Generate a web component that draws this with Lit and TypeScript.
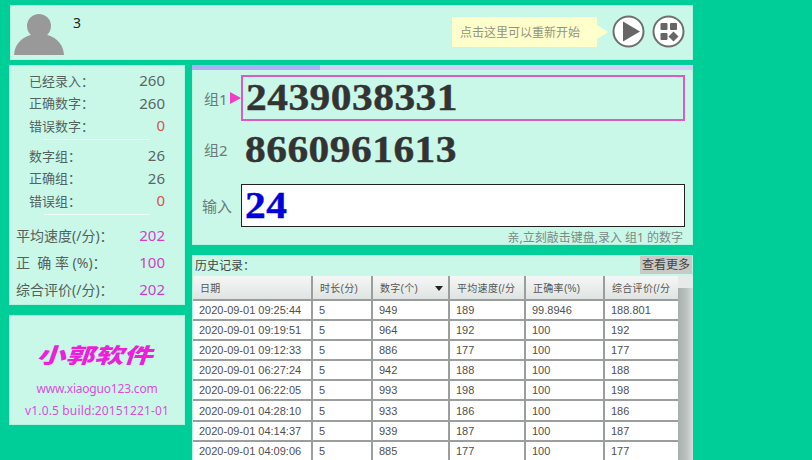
import { LitElement, html, css } from "lit";
import { customElement } from "lit/decorators.js";

const ROWS = [
  ["2020-09-01 09:25:44", "5", "949", "189", "99.8946", "188.801"],
  ["2020-09-01 09:19:51", "5", "964", "192", "100", "192"],
  ["2020-09-01 09:12:33", "5", "886", "177", "100", "177"],
  ["2020-09-01 06:27:24", "5", "942", "188", "100", "188"],
  ["2020-09-01 06:22:05", "5", "993", "198", "100", "198"],
  ["2020-09-01 04:28:10", "5", "933", "186", "100", "186"],
  ["2020-09-01 04:14:37", "5", "939", "187", "100", "187"],
  ["2020-09-01 04:09:06", "5", "885", "177", "100", "177"],
];
const HEAD = ["日期", "时长(分)", "数字(个)", "平均速度(/分", "正确率(%)", "综合评价(/分"];

@customElement("app-root")
export class AppRoot extends LitElement {
  static styles = css`
    :host { display: block; width: 812px; height: 460px; overflow: hidden; background: #00ce98;
      font-family: "Noto Sans", "Noto Sans CJK SC", sans-serif; color: #555; }
    .page { width: 684px; height: 455px; padding: 5px 0 0 9px; display: flex; flex-direction: column; gap: 5px; }
    .panel { background: #c9f8e9; box-shadow: inset 0 0 0 1px #b5f3dc; }
    .body { display: flex; gap: 7px; height: 395px; }
    .col { display: flex; flex-direction: column; gap: 10px; }
    .left { width: 176px; flex: none; }
    .right { width: 501px; flex: none; }

    .top { height: 55px; flex: none; margin-left: 1px; display: flex; align-items: center; padding: 0 4px; box-sizing: border-box; }
    .avatar { width: 50px; height: 41px; align-self: flex-end; margin-bottom: 5px; flex: none; }
    .uid { align-self: flex-start; margin: 6px 0 0 9px; font-size: 14px; line-height: 24px; color: #222; flex: 1; }
    .tip { position: relative; width: 145px; height: 30px; margin: 0 15px 1px 0; background: #ffffcb; display: flex; align-items: center;
      padding-left: 8px; box-sizing: border-box; font-size: 12px; color: #94947f; }
    .tip::after { content: ""; position: absolute; left: 100%; top: 8px; border: 7px solid transparent; border-left: 11px solid #ffffcb; border-right: 0; }
    .ico { width: 33px; height: 33px; flex: none; margin: 0 7px 3px 0; }
    .ico:last-child { margin-right: 4px; }

    .stats { height: 240px; display: flex; flex-direction: column; padding: 4px 20px 0 7px; box-sizing: border-box; }
    .row { display: flex; justify-content: space-between; align-items: center; font-size: 13px; height: 22.5px; padding-left: 13px; color: #55625e; flex: none; }
    .row span:last-child { font-size: 15px; color: #5c6663; }
    .row.err span:last-child { color: #d8534b; }
    .rule { height: 1px; background: #eefff9; margin: 2px 16px 4.5px 28px; flex: none; }
    .rule.second { margin-bottom: 6.5px; }
    .big { display: flex; justify-content: space-between; align-items: center; font-size: 14px; height: 27px; color: #555f5b; flex: none; }
    .big span:last-child { color: #d23fc9; font-size: 15px; }

    .main { height: 180px; box-sizing: border-box; display: flex; flex-direction: column; }
    .bar { height: 5px; background: #d0d0f5; flex: none; }
    .bar i { display: block; height: 100%; width: 128px; background: #aeaef8; }
    .grp { display: flex; align-items: center; position: relative; flex: none; }
    .lbl { width: 49px; padding-left: 12px; box-sizing: border-box; font-size: 15px; color: #6d7b76; flex: none; }
    .num { font-family: "Liberation Serif", serif; font-weight: 700; font-size: 37px; color: #333; padding-left: 4px; }
    .dg { display: inline-block; transform: scaleX(1.12); transform-origin: left center; letter-spacing: .43px; -webkit-text-stroke: .4px currentColor; }
    .g1 { margin-top: 5px; height: 46px; }
    .g1 .num { flex: 1; height: 46px; box-sizing: border-box; border: 2px solid #d85cc4; margin-right: 8px; padding-left: 3px; line-height: 42px; }
    .arrow { position: absolute; left: 38px; top: 17px; width: 0; height: 0; border: 6px solid transparent; border-left: 11px solid #f03cc8; border-right: 0; }
    .g2 { margin-top: 7px; height: 42px; }
    .g3 { margin-top: 14px; height: 43px; }
    .g3 .lbl { padding-left: 10px; }
    .g3 .inp { flex: 1; height: 43px; border: 1px solid #222; background: #fff; margin-right: 8px; padding-left: 3px; box-sizing: border-box;
      font-family: "Liberation Serif", serif; font-weight: 700; font-size: 37px; line-height: 41px; color: #0000d8; }
    .hint { text-align: right; font-size: 12px; color: #7b8a85; padding-right: 10px; line-height: 14px; margin-top: 4px; }

    .logo { height: 110px; display: flex; flex-direction: column; align-items: center; color: #d94fdc; font-size: 12px; padding-top: 27px; box-sizing: border-box; }
    .brand { font-size: 21px; font-weight: 900; color: #ee1fdc; line-height: 26px; margin-bottom: 10px; transform: scaleX(1.38) skewX(-14deg); }
    .line { line-height: 22px; }
    .line.url { letter-spacing: -.2px; }
    .line.ver { letter-spacing: .15px; }

    .hist { height: 205px; display: flex; flex-direction: column; overflow: hidden; }
    .hhead { height: 21px; display: flex; justify-content: space-between; flex: none; font-size: 12px; color: #444; align-items: flex-start; padding-left: 3px; line-height: 21px; }
    .more { background: #c9c9c5; width: 52px; height: 18px; margin: 1px 1px 0 0; line-height: 18px; text-align: center; font-size: 12px; color: #444; white-space: nowrap; }
    .tw { display: flex; margin-left: 1px; height: 184px; }
    .tbl { display: grid; grid-template-columns: 118px 58px 75px 74px 77px 73px; column-gap: 2px; width: 485px; background: #9a9f9d; align-content: start;
      grid-template-rows: 23px; grid-auto-rows: 18.1px; row-gap: 2px; overflow: hidden; flex: none; }
    .th { background: linear-gradient(#f5f7f6, #dfe4e2); font-family: "Liberation Sans", "Noto Sans CJK SC", sans-serif; font-size: 10px; color: #555; display: flex; align-items: center; padding-left: 7px; letter-spacing: .3px; position: relative; white-space: nowrap; overflow: hidden; }
    .td { background: #fff; font-family: "Liberation Sans", sans-serif; font-size: 11px; color: #505050; display: flex; align-items: center; padding-left: 6px; }
    .tri { position: absolute; right: 5px; top: 10px; border: 4px solid transparent; border-top: 5px solid #222; border-bottom: 0; }
    .sb { width: 15px; background: linear-gradient(90deg, #a8b0ad, #bcc4c1 60%, #d8dedb); flex: none; }
    .sb i { display: block; height: 12px; background: #e6ebe9; }
  `;

  render() {
    return html`<div class="page">
      <div class="panel top">
        <svg class="avatar" viewBox="0 0 50 41"><circle cx="25" cy="12" r="12" fill="#999"/><path d="M0 41C1 27 12 20 25 20s24 7 25 21z" fill="#999"/></svg>
        <div class="uid">3</div>
        <div class="tip">点击这里可以重新开始</div>
        <svg class="ico" viewBox="0 0 33 33"><circle cx="16.5" cy="16.5" r="15" fill="#fff" stroke="#6f6f6f" stroke-width="2"/><path d="M11 6.5v20L28 16.5z" fill="#666"/></svg>
        <svg class="ico" viewBox="0 0 33 33"><circle cx="16.5" cy="16.5" r="15" fill="#fff" stroke="#6f6f6f" stroke-width="2"/><rect x="8.5" y="8" width="7" height="7" fill="#666" rx="1"/><rect x="18" y="8" width="7" height="7" fill="#666" rx="1"/><rect x="8.5" y="18" width="7" height="7" fill="#666" rx="1"/><path d="M21.5 16.5l5 5-5 5-5-5z" fill="#666"/></svg>
      </div>

      <div class="body">
        <div class="col left">
          <div class="panel stats">
            <div class="row"><span>已经录入：</span><span>260</span></div>
            <div class="row"><span>正确数字：</span><span>260</span></div>
            <div class="row err"><span>错误数字：</span><span>0</span></div>
            <div class="rule"></div>
            <div class="row"><span>数字组：</span><span>26</span></div>
            <div class="row"><span>正确组：</span><span>26</span></div>
            <div class="row err"><span>错误组：</span><span>0</span></div>
            <div class="rule second"></div>
            <div class="big"><span>平均速度(/分)：</span><span>202</span></div>
            <div class="big"><span>正&nbsp;&nbsp;确&nbsp;率 (%)：</span><span>100</span></div>
            <div class="big"><span>综合评价(/分)：</span><span>202</span></div>
          </div>
          <div class="panel logo">
            <div class="brand">小郭软件</div>
            <div class="line url">www.xiaoguo123.com</div>
            <div class="line ver">v1.0.5 build:20151221-01</div>
          </div>
        </div>

        <div class="col right">
          <div class="panel main">
            <div class="bar"><i></i></div>
            <div class="grp g1"><div class="lbl">组1</div><div class="arrow"></div><div class="num"><span class="dg">2439038331</span></div></div>
            <div class="grp g2"><div class="lbl">组2</div><div class="num"><span class="dg">8660961613</span></div></div>
            <div class="grp g3"><div class="lbl">输入</div><div class="inp"><span class="dg">24</span></div></div>
            <div class="hint">亲,立刻敲击键盘,录入 组1 的数字</div>
          </div>
          <div class="panel hist">
            <div class="hhead"><span>历史记录：</span><span class="more">查看更多</span></div>
            <div class="tw">
              <div class="tbl">
                ${HEAD.map((h, i) => html`<div class="th">${h}${i === 2 ? html`<span class="tri"></span>` : ""}</div>`)}
                ${ROWS.map((r) => r.map((c) => html`<div class="td">${c}</div>`))}
              </div>
              <div class="sb"><i></i></div>
            </div>
          </div>
        </div>
      </div>
    </div>`;
  }
}
